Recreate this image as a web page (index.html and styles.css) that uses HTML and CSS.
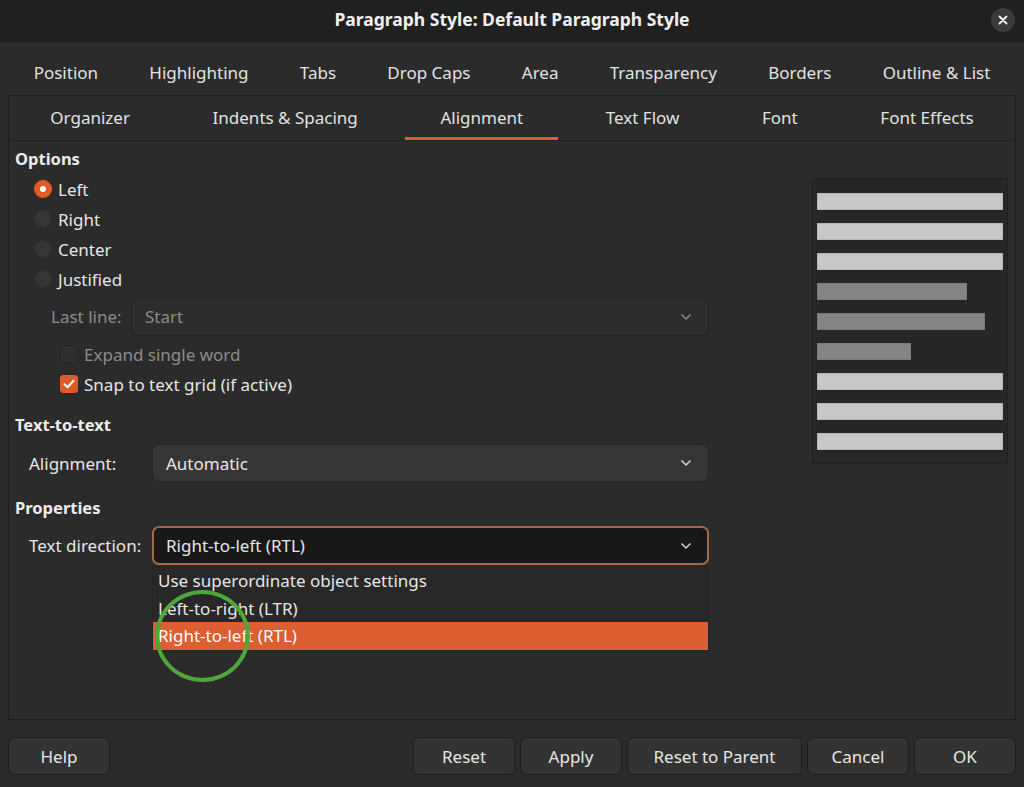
FILE: index.html
```html
<!DOCTYPE html>
<html lang="en">
<head>
<meta charset="utf-8">
<title>Paragraph Style: Default Paragraph Style</title>
<link rel="stylesheet" href="styles.css">
</head>
<body>
<div class="window">
  <header class="titlebar">
    <div class="tb-side"></div>
    <h1 class="title">Paragraph Style: Default Paragraph Style</h1>
    <div class="tb-side tb-right">
      <button class="close" aria-label="Close">
        <svg width="10" height="10" viewBox="0 0 10 10"><path d="M1.5 1.5 L8.5 8.5 M8.5 1.5 L1.5 8.5" stroke="#f2f2f2" stroke-width="1.8" stroke-linecap="round"/></svg>
      </button>
    </div>
  </header>

  <nav class="tabs tabs-outer">
    <span class="tab">Position</span>
    <span class="tab">Highlighting</span>
    <span class="tab">Tabs</span>
    <span class="tab">Drop Caps</span>
    <span class="tab">Area</span>
    <span class="tab">Transparency</span>
    <span class="tab">Borders</span>
    <span class="tab">Outline &amp; List</span>
  </nav>

  <section class="notebook">
    <nav class="tabs tabs-inner">
      <span class="tab">Organizer</span>
      <span class="tab">Indents &amp; Spacing</span>
      <span class="tab active">Alignment</span>
      <span class="tab">Text Flow</span>
      <span class="tab">Font</span>
      <span class="tab">Font Effects</span>
    </nav>

    <div class="page">
      <div class="form">
        <h2 class="section-title">Options</h2>
        <label class="radio-row"><span class="radio checked"></span>Left</label>
        <label class="radio-row"><span class="radio"></span>Right</label>
        <label class="radio-row"><span class="radio"></span>Center</label>
        <label class="radio-row"><span class="radio"></span>Justified</label>

        <div class="lastline-row">
          <span class="field-label lastline-label disabled">Last line:</span>
          <div class="combo combo-disabled">
            <span>Start</span>
            <svg class="chev" width="12" height="8" viewBox="0 0 12 8"><polyline points="1.5,1.5 6,6 10.5,1.5" fill="none" stroke="#8a8a8a" stroke-width="1.5"/></svg>
          </div>
        </div>

        <label class="check-row disabled"><span class="check"></span>Expand single word</label>
        <label class="check-row"><span class="check checked">
          <svg width="12" height="10" viewBox="0 0 12 10"><polyline points="1.5,5.2 4.6,8.2 10.5,1.8" fill="none" stroke="#fff" stroke-width="2" stroke-linecap="round" stroke-linejoin="round"/></svg>
        </span>Snap to text grid (if active)</label>

        <h2 class="section-title sec-gap">Text-to-text</h2>
        <div class="combo-row row-align">
          <span class="field-label">Alignment:</span>
          <div class="combo">
            <span>Automatic</span>
            <svg class="chev" width="12" height="8" viewBox="0 0 12 8"><polyline points="1.5,1.5 6,6 10.5,1.5" fill="none" stroke="#d8d8d8" stroke-width="1.5"/></svg>
          </div>
        </div>

        <h2 class="section-title sec-gap">Properties</h2>
        <div class="combo-row row-dir">
          <span class="field-label">Text direction:</span>
          <div class="combo combo-focus">
            <span>Right-to-left (RTL)</span>
            <svg class="chev" width="12" height="8" viewBox="0 0 12 8"><polyline points="1.5,1.5 6,6 10.5,1.5" fill="none" stroke="#d8d8d8" stroke-width="1.5"/></svg>
          </div>
          <ul class="dropdown">
            <li>Use superordinate object settings</li>
            <li>Left-to-right (LTR)</li>
            <li class="selected">Right-to-left (RTL)</li>
          </ul>
          <span class="annot-circle"></span>
        </div>
      </div>

      <div class="preview">
        <span class="bar"></span>
        <span class="bar"></span>
        <span class="bar"></span>
        <span class="bar dim w150"></span>
        <span class="bar dim w168"></span>
        <span class="bar dim w94"></span>
        <span class="bar"></span>
        <span class="bar"></span>
        <span class="bar"></span>
      </div>
    </div>
  </section>

  <footer class="buttons">
    <button class="btn">Help</button>
    <span class="spacer"></span>
    <button class="btn">Reset</button>
    <button class="btn">Apply</button>
    <button class="btn wide">Reset to Parent</button>
    <button class="btn">Cancel</button>
    <button class="btn">OK</button>
  </footer>
</div>
</body>
</html>
```

FILE: styles.css
```css
* { box-sizing: border-box; }

html, body {
  margin: 0;
  padding: 0;
  background: #2b2b2b;
}

body {
  font-family: "Noto Sans", "Open Sans", "DejaVu Sans", sans-serif;
  font-size: 17px;
  color: #e6e6e6;
}

.window {
  width: 1024px;
  height: 787px;
  display: flex;
  flex-direction: column;
  background: #2b2b2b;
  overflow: hidden;
}

/* Title bar */
.titlebar {
  height: 42px;
  flex: 0 0 42px;
  background: #202020;
  display: grid;
  grid-template-columns: 1fr auto 1fr;
  align-items: center;
  border-bottom: 1px solid #1a1a1a;
  padding-bottom: 3px;
}
.title {
  margin: 0;
  font-size: 17.5px;
  font-weight: 700;
  color: #f0f0f0;
}
.tb-right {
  display: flex;
  justify-content: flex-end;
  padding-right: 9px;
  padding-top: 1px;
}
.close {
  width: 24px;
  height: 24px;
  border-radius: 50%;
  border: none;
  background: #3b3b3b;
  display: flex;
  align-items: center;
  justify-content: center;
  padding: 0;
}

/* Tabs */
.tabs {
  display: flex;
  margin: 0 8px;
}
.tab {
  flex: 1 1 auto;
  text-align: center;
  white-space: nowrap;
  font-size: 17px;
  color: #e2e2e2;
}
.tabs-outer {
  height: 53px;
  flex: 0 0 53px;
  align-items: center;
  padding-top: 7px;
}
.notebook {
  flex: 0 0 625px;
  margin: 0 8px;
  border: 1px solid #1c1c1c;
  display: flex;
  flex-direction: column;
}
.tabs-inner {
  margin: 0;
  height: 45px;
  flex: 0 0 45px;
  border-bottom: 1px solid #222;
}
.tabs-inner .tab {
  display: flex;
  align-items: center;
  justify-content: center;
  margin: 0 6px;
  border-bottom: 3px solid transparent;
  padding-top: 1px;
}
.tabs-inner .tab.active {
  border-bottom-color: #e05c2a;
}

/* Page */
.page {
  flex: 1 1 auto;
  display: flex;
  padding: 6px 7px 0 6px;
}
.form {
  width: 694px;
  flex: 0 0 694px;
  display: flex;
  flex-direction: column;
}
.section-title {
  margin: 0;
  height: 24px;
  line-height: 24px;
  font-size: 16.5px;
  font-weight: 700;
  color: #ececec;
  margin-bottom: 3px;
}
.sec-gap { margin-top: 14px; }

.radio-row {
  height: 30px;
  display: flex;
  align-items: center;
  padding-left: 19px;
  gap: 6px;
}
.radio {
  width: 18px;
  height: 18px;
  border-radius: 50%;
  background: #363636;
  border: 1px solid #2f2f2f;
  display: flex;
  align-items: center;
  justify-content: center;
}
.radio.checked {
  background: #e45a24;
  border-color: #e45a24;
}
.radio.checked::after {
  content: "";
  width: 6px;
  height: 6px;
  border-radius: 50%;
  background: #fff;
}

.lastline-row {
  margin-top: 3px;
  height: 39px;
  display: flex;
  align-items: center;
  padding-left: 36px;
  gap: 8px;
}
.lastline-label { width: 72px; flex: 0 0 72px; }
.field-label { white-space: nowrap; }
.disabled, .field-label.disabled { color: #8c8c8c; }

.combo {
  flex: 1 1 auto;
  height: 100%;
  border-radius: 7px;
  background: #363636;
  border: 1px solid #262626;
  display: flex;
  align-items: center;
  justify-content: space-between;
  padding: 0 16px 0 13px;
}
.combo-disabled {
  background: #2d2d2d;
  border-color: #242424;
  color: #8c8c8c;
}
.combo-focus {
  background: #181818;
  border: 2px solid #a8674c;
  padding-left: 12px;
  padding-right: 15px;
}

.check-row {
  height: 30px;
  display: flex;
  align-items: center;
  padding-left: 45px;
  gap: 6px;
}
.lastline-row + .check-row { margin-top: 3px; }
.check {
  width: 18px;
  height: 18px;
  border-radius: 3px;
  background: #2f2f2f;
  border: 1px solid #272727;
  display: flex;
  align-items: center;
  justify-content: center;
}
.check.checked {
  background: #e0592a;
  border-color: #e0592a;
}

.combo-row {
  display: grid;
  grid-template-columns: 137px 1fr;
  position: relative;
}
.combo-row .field-label {
  padding-left: 14px;
  align-self: center;
}
.row-align { margin-top: 4px; height: 38px; }
.row-dir { margin-top: 3px; grid-template-rows: 39px auto; }

.dropdown {
  grid-column: 2;
  list-style: none;
  margin: 1px 0 0;
  padding: 0;
  background: #282828;
  border: 1px solid #242424;
}
.dropdown li {
  height: 27.7px;
  line-height: 27.7px;
  padding-left: 5px;
  white-space: nowrap;
}
.dropdown li.selected {
  background: #dc5e31;
  color: #fff;
}

.annot-circle {
  position: absolute;
  left: 140px;
  top: 64px;
  width: 95px;
  height: 92px;
  border: 4px solid #4fa63a;
  border-radius: 50%;
  pointer-events: none;
}

/* Preview */
.preview {
  margin-left: auto;
  margin-top: 31px;
  width: 196px;
  height: 286px;
  background: #272727;
  border: 1px solid #202020;
  padding: 14px 4px 0 4px;
  display: flex;
  flex-direction: column;
  gap: 13px;
}
.bar {
  display: block;
  height: 17px;
  width: 186px;
  background: #c7c7c7;
  border: 1px solid #b5b5b5;
}
.bar.dim {
  background: #858585;
  border-color: #7a7a7a;
}
.w150 { width: 150px; }
.w168 { width: 168px; }
.w94 { width: 94px; }

/* Buttons */
.buttons {
  display: flex;
  align-items: center;
  gap: 5px;
  padding: 17px 8px 12px;
  height: 67px;
}
.spacer { flex: 1 1 auto; }
.btn {
  height: 38px;
  width: 102px;
  padding: 0;
  border-radius: 6px;
  background: #333333;
  border: 1px solid #1d1d1d;
  color: #e6e6e6;
  font-family: inherit;
  font-size: 17px;
}
.btn.wide { width: 175px; }
```
